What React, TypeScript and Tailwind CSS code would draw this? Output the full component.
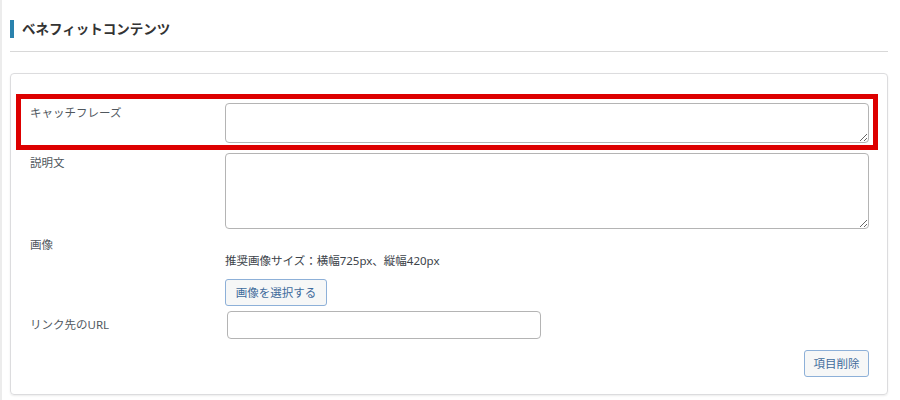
import React from 'react';

const labelClass = 'w-[195px] shrink-0 pt-[2px] text-[11.5px] leading-[16px] text-[#50575e]';
const fieldClass =
	'block w-full rounded-[4px] border border-[#b4b4b4] bg-white px-2 py-1 text-[12px] outline-none';
const buttonClass =
	'flex items-center justify-center rounded-[3px] border border-[#8db0d8] bg-[#f6f7f7] text-[11.5px] leading-none text-[#3f6b9c]';

const App = () => {
	return (
		<div
			className="min-h-[400px] w-full border-l-2 border-[#ececec] bg-white"
			style={{ fontFamily: '"Noto Sans", "Noto Sans CJK JP", sans-serif' }}
		>
			<div className="ml-[8px] w-[878px] pt-[20px]">
				<div className="flex h-[18px] items-center gap-[8px]">
					<span className="block h-[18px] w-[4px] bg-[#2a82ad]" />
					<h2 className="text-[13.5px] font-bold text-[#333]">ベネフィットコンテンツ</h2>
				</div>
				<div className="mt-[13px] border-t border-[#d8d8d8]" />

				<div className="mt-[21px] rounded-[4px] border border-[#dcdcde] pb-[17px] pl-[5px] pr-[9px] pt-[20px] shadow-[0_1px_2px_rgba(0,0,0,0.08)]">
					<div className="flex border-[5px] border-[#dd0000] pb-[2px] pl-[9px] pr-[4px] pt-[4px]">
						<span className={labelClass}>キャッチフレーズ</span>
						<textarea className={`${fieldClass} h-[40px]`} />
					</div>

					<div className="mt-[3px] flex pl-[14px] pr-[9px]">
						<span className={labelClass}>説明文</span>
						<textarea className={`${fieldClass} h-[76px]`} />
					</div>

					<div className="mt-[6px] flex pl-[14px] pr-[9px]">
						<span className={labelClass}>画像</span>
						<div className="flex flex-col items-start pt-[18px]">
							<span className="text-[11.5px] leading-[16px] text-[#3c434a]">
								推奨画像サイズ：横幅725px、縦幅420px
							</span>
							<button className={`${buttonClass} mt-[10px] h-[27px] w-[102px]`}>
								画像を選択する
							</button>
						</div>
					</div>

					<div className="mt-[5px] flex items-center pl-[14px] pr-[9px]">
						<span className="w-[195px] shrink-0 text-[11.5px] leading-[16px] text-[#50575e]">
							リンク先のURL
						</span>
						<input type="text" className={`${fieldClass} ml-[2px] h-[28px] !w-[314px]`} />
					</div>

					<div className="mt-[11px] flex justify-end pr-[9px]">
						<button className={`${buttonClass} h-[27px] w-[65px]`}>項目削除</button>
					</div>
				</div>
			</div>
		</div>
	);
};

export default App;
